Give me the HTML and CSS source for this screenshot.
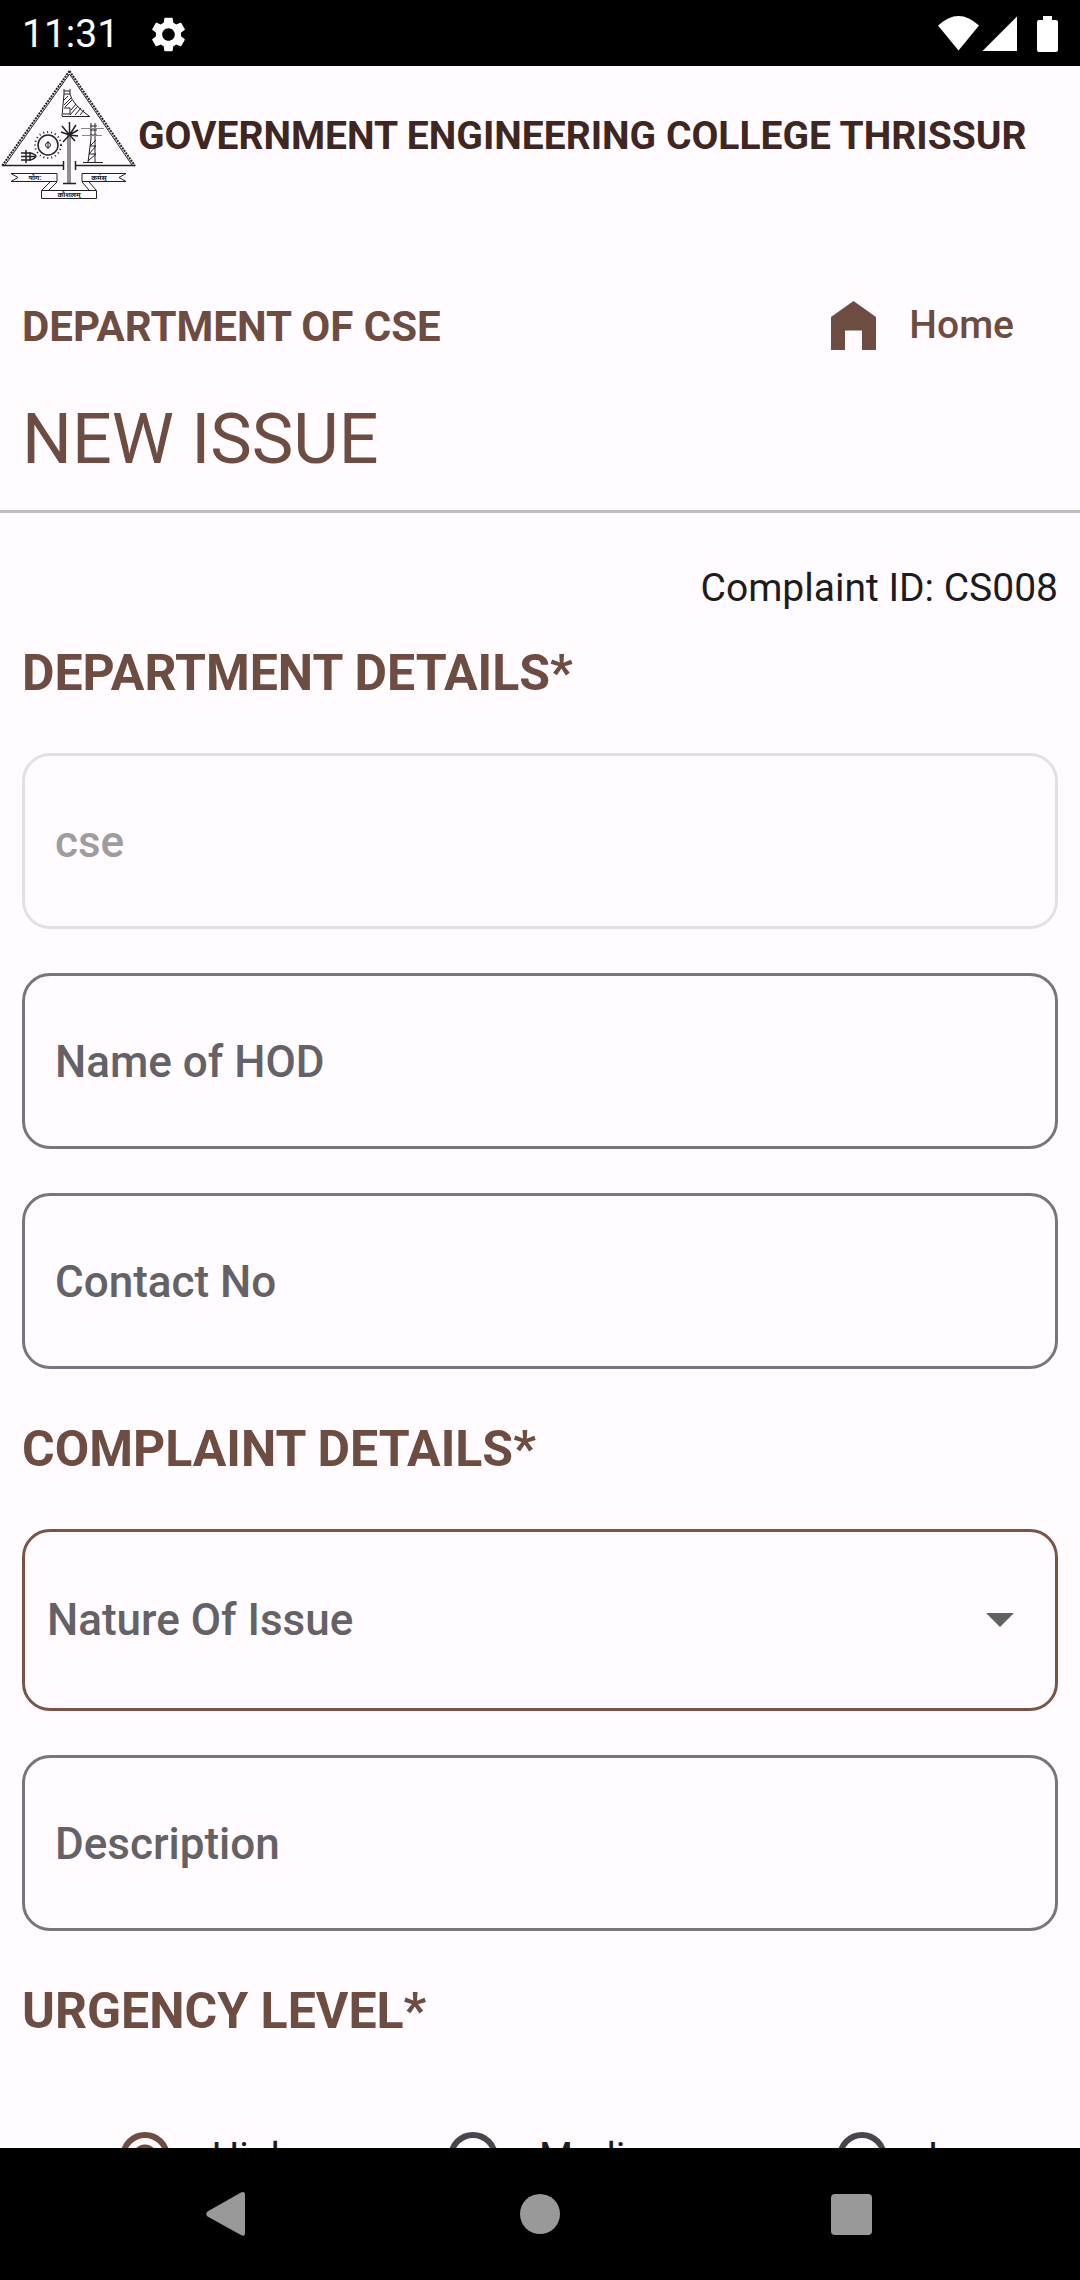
FILE: index.html
```html
<!DOCTYPE html>
<html lang="en">
<head>
<meta charset="utf-8">
<meta name="viewport" content="width=device-width, initial-scale=1">
<title>New Issue</title>
<link rel="stylesheet" href="styles.css">
</head>
<body>
<div class="app">
  <div class="status-bar">
    <span class="clock">11:31</span>
    <svg class="gear" viewBox="2 2 20 20" width="35" height="35" aria-hidden="true"><path fill="#fff" d="M19.14 12.94c.04-.3.06-.61.06-.94 0-.32-.02-.64-.07-.94l2.03-1.58c.18-.14.23-.41.12-.61l-1.92-3.32c-.12-.22-.37-.29-.59-.22l-2.39.96c-.5-.38-1.03-.7-1.62-.94l-.36-2.54c-.04-.24-.24-.41-.48-.41h-3.84c-.24 0-.43.17-.47.41l-.36 2.54c-.59.24-1.13.57-1.62.94l-2.39-.96c-.22-.08-.47 0-.59.22L2.740 8.870c-.12.21-.08.47.12.61l2.03 1.58c-.05.3-.09.63-.09.94s.02.64.07.94l-2.03 1.58c-.18.14-.23.41-.12.61l1.92 3.32c.12.22.37.29.59.22l2.39-.96c.5.38 1.03.7 1.62.94l.36 2.54c.05.24.24.41.48.41h3.84c.24 0 .44-.17.47-.41l.36-2.54c.59-.24 1.13-.56 1.62-.94l2.39.96c.22.08.47 0 .59-.22l1.92-3.32c.12-.22.07-.47-.12-.61l-2.01-1.58zM12 15.6c-1.980 0-3.6-1.620-3.6-3.6s1.620-3.6 3.6-3.6 3.6 1.620 3.6 3.6-1.620 3.6-3.6 3.6z"/></svg>
    <svg class="signals" viewBox="0 0 120 36" width="120" height="36" aria-hidden="true"><g fill="#fff"><path d="M0 9.500Q20.500-9.500 41 9.500L20.500 34.500z"/><path d="M44.500 35L79 .5V35z"/><path d="M105 0h9v4h4q2 0 2 2v28q0 2-2 2h-17q-2 0-2-2V6q0-2 2-2h4z"/></g></svg>
  </div>

  <main class="screen">
    <header class="brand">
      <svg class="crest" viewBox="0 0 138 138" width="138" height="138" role="img" aria-label="College crest">
        <g fill="none" stroke="#222" stroke-width="1">
          <path stroke-width="2" stroke-dasharray="2 1" d="M69.500 5L2 100M69.500 5L135 100"/>
          <path stroke-width="1" d="M69.500 8L5 99M69.500 8L132 99"/>
          <path stroke-width="1.500" d="M2 99.500H63M76 99.500H135M63.500 95v9M75.500 95v9M63 117.500h13"/>
          <path d="M68 68v49M70 68v49"/>
          <path stroke-width="1.500" d="M69.500 69L62 60M69.500 69L61 66M69.500 69L63 76M69.500 69V56M69.500 69L76 59M69.500 69L78 64M69.500 69L78 70M69.500 69L75 75"/>
          <path d="M64 23v5h6v-5M64 25h6M64 28L62 50M62 50.500h28M70 28q2 10 19 22M64 42h6v6h-7M64 34l4-4M64 39l7-7M65 41l7-7M71 44l5-6M70 49l8-9M75 49l6-7M80 49l4-5"/>
          <circle cx="48" cy="79" r="10" stroke-width="1.500"/>
          <circle cx="48" cy="79" r="13" stroke-width="2" stroke-dasharray="1 3"/>
          <circle cx="48" cy="79" r="2.500"/><path d="M48 75v8"/>
          <path stroke-width="1.500" d="M21 87h9q5 1 6 3q-1 3-6 4h-9M21 90.500h14M26 84v13M30 86v9"/>
          <path d="M91 57v16M95 57v16M90 60h7M90 64h7M90 69h7M91 73L88 96M95 73v23M90 80l6-6M89 88l7-8M88 95l8-7M90 80h6M89 88h7M83 96.500h20"/>
          <path stroke="#888" d="M81 62.500h23M82 69.500h20"/>
          <path d="M11 107.500h46v8H11l7-4zM126 107.500H82v8h44l-7-4zM41.500 124.500h55v8h-55zM50 116l-8 8M57 116l-8 8M82 116l7 8M89 116l7 8"/>
        </g>
        <g class="motto" text-anchor="middle"><text x="35" y="114">योग:</text><text x="99" y="114">कर्मसु</text><text x="69" y="131">कौशलम्</text></g>
      </svg>
      <span class="college">GOVERNMENT ENGINEERING COLLEGE THRISSUR</span>
    </header>

    <div class="title-row">
      <span class="department">DEPARTMENT OF CSE</span>
      <a class="home" href="#">
        <svg viewBox="0 0 45 49" width="45" height="49" aria-hidden="true"><path fill="#6d4c41" d="M0 16L22.500 0 45 16V49H31V29.500H14V49H0z"/></svg>
        Home
      </a>
    </div>
    <h1 class="page-title">NEW ISSUE</h1>

    <form class="form">
      <p class="complaint-id">Complaint ID: CS008</p>

      <h2 class="section">DEPARTMENT DETAILS*</h2>
      <div class="fields">
        <input class="field" type="text" value="cse" aria-label="Department" disabled>
        <input class="field" type="text" placeholder="Name of HOD" aria-label="Name of HOD">
        <input class="field" type="tel" placeholder="Contact No" aria-label="Contact No">
      </div>

      <h2 class="section">COMPLAINT DETAILS*</h2>
      <div class="fields">
        <div class="picker">
          <select class="select" aria-label="Nature Of Issue"><option>Nature Of Issue</option></select>
          <svg class="caret" viewBox="0 0 28 14" width="28" height="14" aria-hidden="true"><path fill="#616161" d="M0 0h28L14 14z"/></svg>
        </div>
        <input class="field" type="text" placeholder="Description" aria-label="Description">
      </div>

      <h2 class="section">URGENCY LEVEL*</h2>
      <div class="levels">
        <label class="level"><input class="radio" type="radio" name="urgency" checked>High</label>
        <label class="level"><input class="radio" type="radio" name="urgency">Medium</label>
        <label class="level"><input class="radio" type="radio" name="urgency">Low</label>
      </div>
    </form>
  </main>

  <nav class="nav-bar">
    <button class="nav-button" type="button" aria-label="Back"><svg viewBox="0 0 46 46" width="46" height="46"><path fill="#999" d="M1.500 20.500L35 1.500Q39 0 39 4V42Q39 46 35 44L1.500 25.500Q-1 23 1.500 20.500z"/></svg></button>
    <button class="nav-button" type="button" aria-label="Home"><svg viewBox="0 0 40 40" width="40" height="40"><circle cx="20" cy="20" r="20" fill="#999"/></svg></button>
    <button class="nav-button" type="button" aria-label="Recent apps"><svg viewBox="0 0 41 41" width="41" height="41"><rect width="41" height="41" rx="4" fill="#999"/></svg></button>
  </nav>
</div>
</body>
</html>
```
FILE: styles.css
```css
* {
  box-sizing: border-box;
}

body {
  margin: 0;
  background: #fffbff;
  color: #1c1b1f;
  font-family: Roboto, "Noto Sans", sans-serif;
  font-size: 39px;
}

.app {
  display: flex;
  flex-direction: column;
  height: 100vh;
}

.status-bar {
  display: flex;
  align-items: center;
  flex: none;
  height: 66px;
  padding: 2px 22px 0;
  background: #000;
  color: #fff;
}

.gear {
  margin-left: 32px;
}

.signals {
  margin-left: auto;
}

/* Scrolling area between the two system bars */
.screen {
  flex: 1;
  min-height: 0;
  overflow-y: auto;
  scrollbar-width: none;
}

.brand {
  display: flex;
  align-items: center;
}

.crest {
  flex: none;
}

.motto {
  fill: #222;
  font-size: 7px;
  font-weight: 700;
}

.college {
  padding-top: 2px;
  color: #3e2723;
  font-weight: 700;
  white-space: nowrap;
}

.title-row {
  display: flex;
  align-items: center;
  justify-content: space-between;
  height: 132px;
  margin-top: 55px;
  padding: 0 66px 0 22px;
  color: #6d4c41;
}

.department {
  padding-top: 2px;
  font-size: 42px;
  font-weight: 700;
}

.home {
  display: flex;
  align-items: center;
  gap: 33px;
  color: inherit;
  font-weight: 500;
  text-decoration: none;
}

.page-title {
  margin: 0;
  padding: 8px 22px 31px;
  border-bottom: 3px solid #bdbdbd;
  color: #6d4c41;
  font-size: 70px;
  font-weight: 400;
  line-height: 80px;
}

.form {
  padding: 52px 22px;
}

.complaint-id {
  margin: 0;
  line-height: 46px;
  text-align: right;
}

.section {
  margin: 0;
  padding: 51px 0;
  color: #6d4c41;
  font-size: 50px;
  font-weight: 700;
  line-height: 58px;
}

.complaint-id + .section {
  padding-top: 33px;
}

.fields {
  display: flex;
  flex-direction: column;
  gap: 44px;
}

.field,
.select {
  width: 100%;
  height: 176px;
  margin: 0;
  padding: 2px 30px 0;
  border: 3px solid #79747e;
  border-radius: 28px;
  background: transparent;
  color: #646266;
  font: 500 44px Roboto, sans-serif;
}

.field::placeholder {
  color: #646266;
  opacity: 1;
}

.field:disabled {
  border-color: #e4dfe3;
  color: #9e9c9e;
}

.picker {
  display: grid;
  align-items: center;
}

.picker > * {
  grid-area: 1 / 1;
}

.select {
  appearance: none;
  height: 182px;
  padding: 0 22px;
  border-color: #795548;
}

.caret {
  justify-self: end;
  margin-right: 44px;
  pointer-events: none;
}

.levels {
  display: flex;
  justify-content: space-around;
}

.level {
  display: flex;
  align-items: center;
  height: 132px;
}

.radio {
  appearance: none;
  width: 50px;
  height: 50px;
  margin: 0 41px;
  border: 6px solid #49454f;
  border-radius: 50%;
}

.radio:checked {
  border-color: #6d4c41;
  background: radial-gradient(circle, #6d4c41 12px, transparent 13px);
}

.nav-bar {
  display: flex;
  flex: none;
  justify-content: center;
  gap: 179px;
  height: 132px;
  background: #000;
}

.nav-button {
  display: flex;
  align-items: center;
  justify-content: center;
  width: 132px;
  padding: 0;
  border: 0;
  background: none;
}
```
